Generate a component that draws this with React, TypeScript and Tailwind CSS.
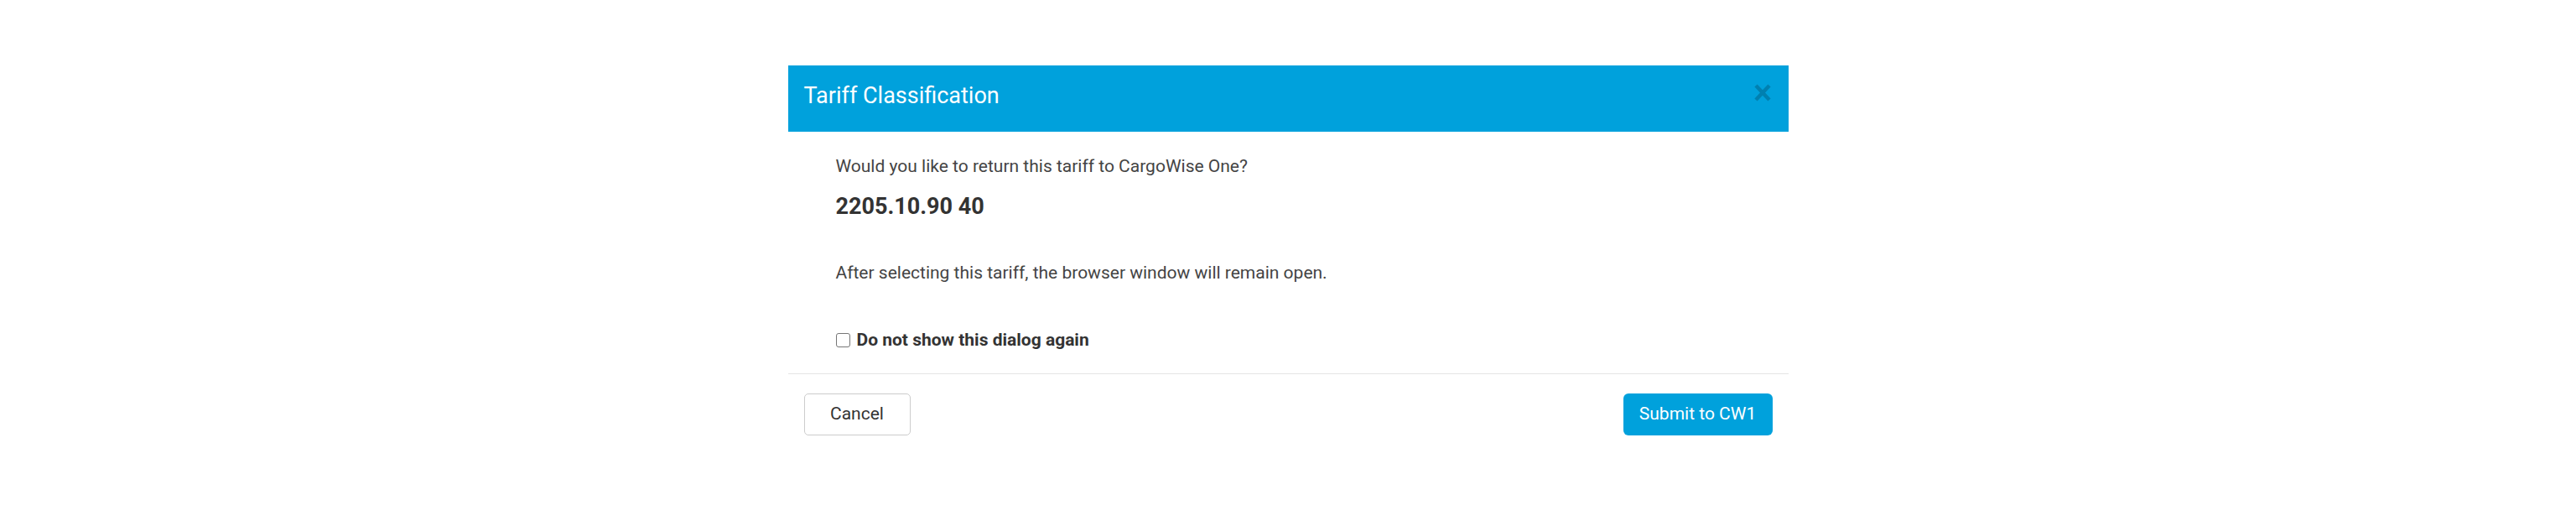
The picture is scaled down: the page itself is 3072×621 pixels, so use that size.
export default function App() {
  return (
    <div className="min-h-[621px] bg-white pt-[78px] font-['Roboto',sans-serif]">
      <div className="mx-auto w-[1193px] bg-white">
        {/* Header */}
        <div className="flex h-[79px] items-start justify-between bg-[#00a1dc] pl-[19px] pr-[21px]">
          <h2 className="pt-[16px] text-[27px] leading-[40px] font-normal text-white">
            Tariff Classification
          </h2>
          <button className="mt-[22px] text-[#0080b0]" aria-label="Close">
            <svg width="20" height="21" viewBox="0 0 20 21">
              <path d="M2 2 L18 19 M18 2 L2 19" stroke="currentColor" strokeWidth="4.5" />
            </svg>
          </button>
        </div>

        {/* Body */}
        <div className="pl-[57px] pr-[20px] pt-[27px] pb-[26px] text-[#444]">
          <p className="text-[21px] leading-[28px]">Would you like to return this tariff to CargoWise One?</p>
          <p className="mt-[16px] text-[27px] leading-[36px] font-bold text-[#333]">2205.10.90 40</p>
          <p className="mt-[47px] text-[21px] leading-[28px]">
            After selecting this tariff, the browser window will remain open.
          </p>
          <label className="mt-[52px] flex items-center gap-[8px]">
            <span className="h-[17px] w-[17px] rounded-[3px] border border-[#767676] bg-white" />
            <span className="text-[21px] leading-[28px] font-bold text-[#333]">Do not show this dialog again</span>
          </label>
        </div>

        {/* Footer */}
        <div className="flex items-center justify-between border-t border-[#e5e5e5] px-[19px] pt-[23px] pb-[20px]">
          <button className="h-[50px] w-[127px] rounded-[5px] border border-[#cccccc] bg-white text-[21px] text-[#333]">
            Cancel
          </button>
          <button className="h-[50px] w-[178px] rounded-[6px] bg-[#00a1dc] text-[21px] text-white">
            Submit to CW1
          </button>
        </div>
      </div>
    </div>
  );
}
